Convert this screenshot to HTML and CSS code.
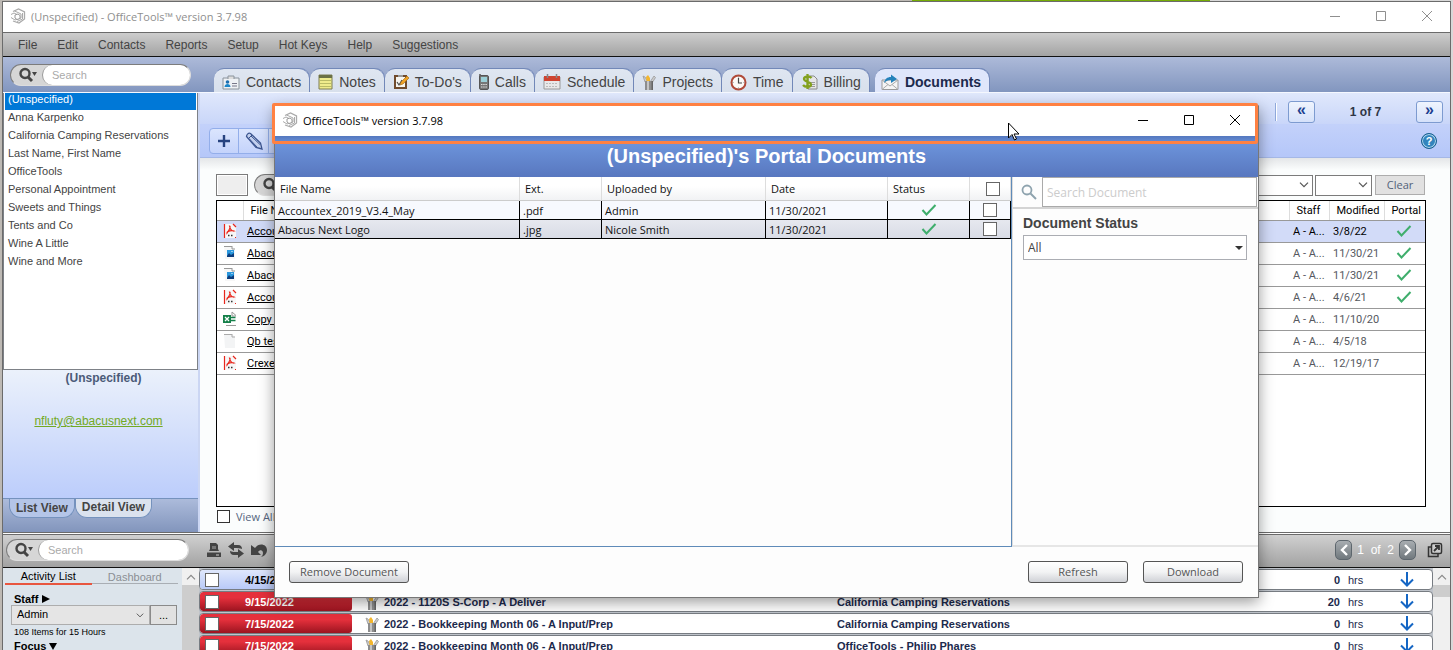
FILE: index.html
```html
<!DOCTYPE html>
<html lang="en">
<head>
    <meta charset="UTF-8">
    <title>OfficeTools - Portal Documents</title>
    <link rel="stylesheet" href="styles.css">
</head>
<body>
<!-- icons -->
<svg class="sprite" width="0" height="0">
    <symbol id="logo" viewBox="0 0 16 16">
        <path d="M3 3.500 8.500 1 14.500 4v7L9 15l-6-2" fill="none" stroke="#aaa" stroke-width="1.300"/>
        <path d="M1 6.500 4 5l3 1.500M1 9.500l4 2.500 6-2V6L8 4.500 4.500 3M12.500 5v6L7 13.500" fill="none" stroke="#aaa"/>
        <path d="M5 7l3-1 2 1.500v3l-3 1-2-1.500z" fill="#fff" stroke="#999"/>
    </symbol>
    <symbol id="lens" viewBox="0 0 20 16">
        <circle cx="7" cy="6.500" r="4.500" fill="none" stroke="#444" stroke-width="2.400"/>
        <path d="M10 10l4 4" stroke="#444" stroke-width="3"/>
        <path d="M14 5h5l-2.500 4z" fill="#444"/>
    </symbol>
    <symbol id="pdf" viewBox="0 0 14 16">
        <path d="M1 1h9l3 3v11H1z" fill="#f7f7f7"/>
        <path d="M1.500 1v14M10 1l3 3M12 14.500h1" fill="none" stroke="#e8261c" stroke-width="1.200"/>
        <path d="M6.500 3c1.500 0 0 4-2.500 7 0-2 5-3 7-2-2 .5-4-2-4.500-5z" fill="none" stroke="#e8261c" stroke-width="1.200"/>
        <path d="M5 12.500h1.500M8 12.500h1.500" stroke="#333" stroke-width="1.500"/>
    </symbol>
    <symbol id="img" viewBox="0 0 14 16">
        <path d="M1 1h8l3 3v10H2z" fill="#f7f7f7"/>
        <path d="M1 1.500h8M9 1v3h3" fill="none" stroke="#999"/>
        <path d="M4 5h7v7H4z" fill="#2a97dd"/>
        <path d="M4 11l2-3 2 2 3-2v4H4z" fill="#0c3c7c"/>
        <path d="M8.500 6h1v1h-1z" fill="#fff"/>
    </symbol>
    <symbol id="xls" viewBox="0 0 14 16">
        <path d="M9 1l4 3.500M9 1v4h4M3 14.500h10" fill="none" stroke="#999"/>
        <path d="M0 4h8v8H0z" fill="#15804a"/>
        <path d="M2 6l4 4M6 6l-4 4" stroke="#fff" stroke-width="1.300"/>
        <path d="M8 6.500h4.500M8 9.500h4.500" stroke="#15804a" stroke-width="1.500"/>
    </symbol>
    <symbol id="blank" viewBox="0 0 14 16">
        <path d="M1 1h8l3 3v11H2z" fill="#f3f4f5"/>
        <path d="M1 1.500h8M9 1v3h3" fill="none" stroke="#aaa"/>
    </symbol>
    <symbol id="tick" viewBox="0 0 16 12">
        <path d="M1.500 6l4 4.500L14.500 1" fill="none" stroke="#3fae6c" stroke-width="2"/>
    </symbol>
    <symbol id="chev" viewBox="0 0 10 6">
        <path d="M1 .7 5 4.700 9 .7" fill="none" stroke="#555" stroke-width="1.200"/>
    </symbol>
    <symbol id="chev-up" viewBox="0 0 10 6">
        <path d="M1 5.300 5 1.300 9 5.300" fill="none" stroke="#888" stroke-width="1.200"/>
    </symbol>
    <symbol id="down" viewBox="0 0 14 15">
        <path d="M7 0v13M1 7.500l6 6 6-6" fill="none" stroke="#1566c4" stroke-width="2"/>
    </symbol>
    <symbol id="pencils" viewBox="0 0 14 16">
        <path d="M3 8 1 2l2 1 3 5M8 8l4-6 1.500 1.500L10 9" fill="#ccc" stroke="#999" stroke-width=".8"/>
        <path d="M4.500 7 4 3l2-2 2 3v4z" fill="#f3b62e"/>
        <path d="M3 7h8v9H3z" fill="#8d8d8d"/>
        <path d="M5 7h2v9H5z" fill="#c5c5c5"/>
        <path d="M9.500 7H11v9H9.500z" fill="#666"/>
    </symbol>
    <symbol id="win-min" viewBox="0 0 10 10"><path d="M0 5.500h10" stroke="currentColor"/></symbol>
    <symbol id="win-max" viewBox="0 0 10 10"><path d="M.5.5h9v9h-9z" fill="none" stroke="currentColor"/></symbol>
    <symbol id="win-close" viewBox="0 0 10 10"><path d="M0 0l10 10M10 0 0 10" stroke="currentColor"/></symbol>
</svg>

<div class="window">
    <div class="title-bar">
        <svg class="logo"><use href="#logo"/></svg>
        <span>(Unspecified) - OfficeTools™ version 3.7.98</span>
        <div class="win-buttons">
            <button aria-label="Minimize"><svg><use href="#win-min"/></svg></button>
            <button aria-label="Maximize"><svg><use href="#win-max"/></svg></button>
            <button aria-label="Close"><svg><use href="#win-close"/></svg></button>
        </div>
    </div>

    <nav class="menu">
        <a href="#">File</a>
        <a href="#">Edit</a>
        <a href="#">Contacts</a>
        <a href="#">Reports</a>
        <a href="#">Setup</a>
        <a href="#">Hot Keys</a>
        <a href="#">Help</a>
        <a href="#">Suggestions</a>
    </nav>

    <div class="tab-header">
        <div class="pill">
            <button aria-label="Search options"><svg><use href="#lens"/></svg></button>
            <input type="text" placeholder="Search" aria-label="Search contacts">
        </div>
        <nav class="tabs">
            <a href="#">
                <svg width="18" height="16" viewBox="0 0 18 16">
                    <path d="M1 4h16v11H1z" fill="#eef1f4" stroke="#8b949c"/>
                    <path d="M6 5V2h6v3" fill="#ddd" stroke="#8b949c"/>
                    <circle cx="5.500" cy="8" r="1.800" fill="#1d6fb0"/>
                    <path d="M2.500 13c0-4 6-4 6 0z" fill="#1d86c8"/>
                    <path d="M10 9.500h5M10 12h5" stroke="#778"/>
                </svg>Contacts</a>
            <a href="#">
                <svg width="15" height="16" viewBox="0 0 15 16">
                    <path d="M1 1h13v14H1z" fill="#eeeb8c" stroke="#7d7d52"/>
                    <path d="M1 1h13v3H1z" fill="#6b7145"/>
                    <path d="M2 6.500h11M2 9.500h11M2 12.500h11" stroke="#b9bb66"/>
                </svg>Notes</a>
            <a href="#">
                <svg width="16" height="16" viewBox="0 0 16 16">
                    <path d="M1 1h13v14H1z" fill="#704b2c"/>
                    <path d="M3 3h9v10H3z" fill="#f7f5ef"/>
                    <path d="M5 1h5v2H5z" fill="#999"/>
                    <path d="M4 8l2 3 3-5" fill="none" stroke="#4a4a4a" stroke-width="1.200"/>
                    <path d="M7 11l1-3 6-6 2 2-6 6z" fill="#f0a325" stroke="#9c6510" stroke-width=".6"/>
                </svg>To-Do's</a>
            <a href="#">
                <svg width="10" height="16" viewBox="0 0 10 16">
                    <path d="M1 0v3" stroke="#555" stroke-width="1.500"/>
                    <rect x=".5" y="1.500" width="9" height="14" rx="1.500" fill="#777" stroke="#555"/>
                    <path d="M2 3h6v5H2z" fill="#9bd0d8"/>
                    <path d="M2 10.500h6M2 13h6" stroke="#ddd" stroke-dasharray="1.500 .7"/>
                </svg>Calls</a>
            <a href="#">
                <svg width="18" height="16" viewBox="0 0 18 16">
                    <path d="M1 3h16v12H1z" fill="#e9e9e9" stroke="#999"/>
                    <path d="M1 2h16v5H1z" fill="#cf4431"/>
                    <path d="M4.500 0v4M13.500 0v4" stroke="#888" stroke-width="1.500"/>
                    <path d="M3 9.500h12M3 12.500h12" stroke="#bbb" stroke-dasharray="2 1"/>
                </svg>Schedule</a>
            <a href="#"><svg width="14" height="16"><use href="#pencils"/></svg>Projects</a>
            <a href="#">
                <svg width="17" height="17" viewBox="0 0 17 17">
                    <circle cx="8.500" cy="8.500" r="7" fill="#fbf9f6" stroke="#b04a39" stroke-width="2"/>
                    <path d="M8.500 4v5H12" fill="none" stroke="#444" stroke-width="1.200"/>
                    <path d="M8.500 2.500v1M8.500 13.500v1M2.500 8.500h1M13.500 8.500h1" stroke="#888"/>
                </svg>Time</a>
            <a href="#">
                <svg width="17" height="16" viewBox="0 0 17 16">
                    <path d="M7 2h6l3 3v10H7z" fill="#e6e6e6" stroke="#8a8a8a"/>
                    <path d="M9 8.500h5M9 10.500h5M9 12.500h5" stroke="#999"/>
                    <path d="M10.500 4C9 2 3 2 3 5s7 2.500 7 5.500-6 3-8 .5M6.500 0v15" fill="none" stroke="#83a11d" stroke-width="2.300"/>
                </svg>Billing</a>
            <a href="#" class="active">
                <svg width="18" height="16" viewBox="0 0 18 16">
                    <path d="M1 6h16v9.500H1z" fill="#f5f5f5" stroke="#999"/>
                    <path d="M1 6l8 6 8-6M1 15.500l6-5M17 15.500l-6-5" fill="none" stroke="#aaa"/>
                    <path d="M3 9c1-4 3-6 7-6V.5L16 5l-6 4V6C7 6 5 7 3 9z" fill="#2582bb"/>
                </svg>Documents</a>
        </nav>
    </div>

    <div class="main">
        <aside class="sidebar">
            <ul class="contact-list">
                <li class="selected">(Unspecified)</li>
                <li>Anna Karpenko</li>
                <li>California Camping Reservations</li>
                <li>Last Name, First Name</li>
                <li>OfficeTools</li>
                <li>Personal Appointment</li>
                <li>Sweets and Things</li>
                <li>Tents and Co</li>
                <li>Wine A Little</li>
                <li>Wine and More</li>
            </ul>
            <div class="contact-card">
                <b>(Unspecified)</b>
                <a href="#">nfluty@abacusnext.com</a>
            </div>
            <div class="view-tabs">
                <a href="#">List View</a>
                <a href="#" class="active">Detail View</a>
            </div>
        </aside>

        <section class="documents">
            <div class="pager-bar">
                <span class="sep"></span>
                <button>«</button>
                <b>1 of 7</b>
                <button>»</button>
            </div>
            <div class="tool-bar">
                <div class="tool-group">
                    <button aria-label="Add"><svg width="12" height="12" viewBox="0 0 12 12"><path d="M6 0v12M0 6h12" stroke="#27437f" stroke-width="2.400"/></svg></button>
                    <button aria-label="Edit"><svg width="18" height="18" viewBox="0 0 18 18"><path d="M1.500 4.500c0-2 2-4 4-3l10 9.500 1.500 6-6-1.500z" fill="#c3d0ee" stroke="#3c558f" stroke-width="1.300"/><path d="M4 6.500 12 15M6 4l9 8.500M3 7l4-4" stroke="#3c558f"/></svg></button>
                    <button aria-label="More"></button>
                </div>
                <button class="help" aria-label="Help">?</button>
            </div>
            <div class="doc-body">
                <div class="filters">
                    <span class="swatch"></span>
                    <div class="pill">
                        <button aria-label="Search options"><svg><use href="#lens"/></svg></button>
                        <input type="text" aria-label="Search files">
                    </div>
                    <div class="select wide"><select aria-label="Type"><option></option></select><svg><use href="#chev"/></svg></div>
                    <div class="select"><select aria-label="Year"><option></option></select><svg><use href="#chev"/></svg></div>
                    <button class="clear">Clear</button>
                </div>
                <div class="file-box">
                    <table class="files">
                        <thead>
                        <tr><th class="c-icon"></th><th>File Name</th><th class="c-staff">Staff</th><th class="c-mod">Modified</th><th class="c-portal">Portal</th></tr>
                        </thead>
                        <tbody>
                        <tr class="selected"><td><svg><use href="#pdf"/></svg></td><td><a href="#">Accountex</a></td><td>A - A...</td><td>3/8/22</td><td><svg class="tick"><use href="#tick"/></svg></td></tr>
                        <tr><td><svg><use href="#img"/></svg></td><td><a href="#">Abacus Next</a></td><td>A - A...</td><td>11/30/21</td><td><svg class="tick"><use href="#tick"/></svg></td></tr>
                        <tr><td><svg><use href="#img"/></svg></td><td><a href="#">Abacus Next</a></td><td>A - A...</td><td>11/30/21</td><td><svg class="tick"><use href="#tick"/></svg></td></tr>
                        <tr><td><svg><use href="#pdf"/></svg></td><td><a href="#">Accountex</a></td><td>A - A...</td><td>4/6/21</td><td><svg class="tick"><use href="#tick"/></svg></td></tr>
                        <tr><td><svg><use href="#xls"/></svg></td><td><a href="#">Copy of</a></td><td>A - A...</td><td>11/10/20</td><td></td></tr>
                        <tr><td><svg><use href="#blank"/></svg></td><td><a href="#">Qb test</a></td><td>A - A...</td><td>4/5/18</td><td></td></tr>
                        <tr><td><svg><use href="#pdf"/></svg></td><td><a href="#">Crexendo</a></td><td>A - A...</td><td>12/19/17</td><td></td></tr>
                        </tbody>
                    </table>
                </div>
                <label class="view-all"><input type="checkbox">View All</label>
            </div>
        </section>
    </div>

    <div class="lower">
        <div class="lower-bar">
            <div class="pill">
                <button aria-label="Search options"><svg><use href="#lens"/></svg></button>
                <input type="text" placeholder="Search" aria-label="Search activities">
            </div>
            <button aria-label="Print"><svg width="16" height="16" viewBox="0 0 16 16"><path d="M4 1h6l2 2v4l1 2H3l1-2z" fill="#444"/><path d="M6 4h4v3H6z" fill="#777"/><path d="M1 10.500h14V15H1z" fill="#444"/><path d="M10 13h3" stroke="#ccc"/></svg></button>
            <button aria-label="Refresh"><svg width="16" height="16" viewBox="0 0 16 16"><path d="M6 0v3h4c3 0 4 2 4 4-2-1-4-1-8-1v3L0 4.500zM10 16v-3H6c-3 0-4-2-4-4 2 1 4 1 8 1V7l6 4.500z" fill="#444"/></svg></button>
            <button aria-label="Undo"><svg width="18" height="16" viewBox="0 0 18 16"><path d="M1 3v10h10L8 10c2-3 5-2 5 1 0 2-1 3-2 4 4-1 6-4 6-7 0-6-8-8-12-2z" fill="#444"/></svg></button>
            <button aria-label="Expand"><svg width="16" height="16" viewBox="0 0 16 16"><path d="M1 1h6L5 3l8 8-2 2-8-8-2 2zM1 15v-5l4 4z" fill="#444"/></svg></button>
            <div class="lower-pager">
                <button class="step" aria-label="Previous"><svg width="8" height="12" viewBox="0 0 8 12"><path d="M7 1 2 6l5 5" fill="none" stroke="#fff" stroke-width="2.400"/></svg></button>
                <span>1&nbsp; of&nbsp; 2</span>
                <button class="step" aria-label="Next"><svg width="8" height="12" viewBox="0 0 8 12"><path d="m1 1 5 5-5 5" fill="none" stroke="#fff" stroke-width="2.400"/></svg></button>
                <button aria-label="Open in new window"><svg width="16" height="16" viewBox="0 0 16 16"><path d="M4 5H1.500v9.500H11V12" fill="none" stroke="#333" stroke-width="1.500"/><rect x="4.500" y="1.500" width="10" height="10" rx="1.500" fill="#ccc" stroke="#333" stroke-width="1.500"/><path d="M7 9l4-4M8 4h4v4" fill="none" stroke="#333" stroke-width="1.800"/></svg></button>
            </div>
        </div>
        <div class="lower-body">
            <div class="activity">
                <div class="activity-tabs">
                    <a href="#" class="active">Activity List</a>
                    <a href="#">Dashboard</a>
                </div>
                <div class="activity-form">
                    <label for="staff">Staff <i class="tri"></i></label>
                    <div class="staff-row">
                        <div class="select"><select id="staff"><option>Admin</option></select><svg><use href="#chev"/></svg></div>
                        <button>...</button>
                    </div>
                    <small>108 Items for 15 Hours</small>
                    <b>Focus <i class="tri open"></i></b>
                </div>
            </div>
            <div class="scroll"><svg><use href="#chev-up"/></svg></div>
            <div class="tasks">
                <div class="task upcoming">
                    <label class="due"><input type="checkbox">4/15/2022</label>
                    <svg class="kind"><use href="#pencils"/></svg>
                    <span class="name"></span><span class="client"></span>
                    <b class="num">0</b><span class="unit">hrs</span>
                    <svg class="arrow"><use href="#down"/></svg>
                </div>
                <div class="task">
                    <label class="due"><input type="checkbox">9/15/2022</label>
                    <svg class="kind"><use href="#pencils"/></svg>
                    <span class="name">2022 - 1120S S-Corp - A Deliver</span><span class="client">California Camping Reservations</span>
                    <b class="num">20</b><span class="unit">hrs</span>
                    <svg class="arrow"><use href="#down"/></svg>
                </div>
                <div class="task">
                    <label class="due"><input type="checkbox">7/15/2022</label>
                    <svg class="kind"><use href="#pencils"/></svg>
                    <span class="name">2022 - Bookkeeping Month 06 - A Input/Prep</span><span class="client">California Camping Reservations</span>
                    <b class="num">0</b><span class="unit">hrs</span>
                    <svg class="arrow"><use href="#down"/></svg>
                </div>
                <div class="task">
                    <label class="due"><input type="checkbox">7/15/2022</label>
                    <svg class="kind"><use href="#pencils"/></svg>
                    <span class="name">2022 - Bookkeeping Month 06 - A Input/Prep</span><span class="client">OfficeTools - Philip Phares</span>
                    <b class="num">0</b><span class="unit">hrs</span>
                    <svg class="arrow"><use href="#down"/></svg>
                </div>
            </div>
            <div class="scroll light"><svg><use href="#chev-up"/></svg><i></i></div>
        </div>
    </div>
</div>

<!-- portal documents dialog -->
<div class="dialog">
    <div class="title-bar">
        <svg class="logo"><use href="#logo"/></svg>
        <span>OfficeTools™ version 3.7.98</span>
        <div class="win-buttons">
            <button aria-label="Minimize"><svg><use href="#win-min"/></svg></button>
            <button aria-label="Maximize"><svg><use href="#win-max"/></svg></button>
            <button aria-label="Close"><svg><use href="#win-close"/></svg></button>
        </div>
    </div>
    <h1>(Unspecified)'s Portal Documents</h1>
    <div class="dialog-body">
        <div class="portal-list">
            <table>
                <thead>
                <tr><th>File Name</th><th class="w-ext">Ext.</th><th class="w-by">Uploaded by</th><th class="w-date">Date</th><th class="w-status">Status</th><th class="w-check"><input type="checkbox" aria-label="Select all"></th></tr>
                </thead>
                <tbody>
                <tr><td>Accountex_2019_V3.4_May</td><td>.pdf</td><td>Admin</td><td>11/30/2021</td><td class="mid"><svg><use href="#tick"/></svg></td><td class="mid"><input type="checkbox" aria-label="Select Accountex_2019_V3.4_May"></td></tr>
                <tr class="alt"><td>Abacus Next Logo</td><td>.jpg</td><td>Nicole Smith</td><td>11/30/2021</td><td class="mid"><svg><use href="#tick"/></svg></td><td class="mid"><input type="checkbox" aria-label="Select Abacus Next Logo"></td></tr>
                </tbody>
            </table>
        </div>
        <div class="portal-side">
            <div class="doc-search">
                <svg width="16" height="16" viewBox="0 0 16 16"><circle cx="6" cy="6" r="4.500" fill="none" stroke="#8ea3ae" stroke-width="1.800"/><path d="M9.500 9.500 15 15" stroke="#8ea3ae" stroke-width="2"/></svg>
                <input type="text" placeholder="Search Document" aria-label="Search Document">
            </div>
            <div class="doc-status">
                <label for="status">Document Status</label>
                <div class="select"><select id="status"><option>All</option></select><i class="caret"></i></div>
            </div>
        </div>
    </div>
    <div class="dialog-footer">
        <button class="remove">Remove Document</button>
        <button>Refresh</button>
        <button>Download</button>
    </div>
    <div class="highlight"></div>
    <svg class="cursor" width="12" height="19" viewBox="0 0 12 19"><path d="M.5 1v15l3.500-3.500L6.500 18l2-1-2.500-5h5z" fill="#fff" stroke="#000"/></svg>
</div>
</body>
</html>
```
FILE: styles.css
```css
* {
    box-sizing: border-box;
}
body {
    margin: 0;
    height: 100vh;
    overflow: hidden;
    position: relative;
    padding: 1px 2px 0;
    background: linear-gradient(90deg, #bdb9b4 912px, #76ad05 912px, #76ad05 1210px, #d8d8d8 1210px);
    font-family: "Liberation Sans", Arial, sans-serif;
    font-size: 11px;
    color: #444;
}
button, input, select {
    font: inherit;
    color: inherit;
    margin: 0;
    padding: 0;
    border: 0;
    background: none;
}
select {
    appearance: none;
    border-radius: 0;
}
a {
    color: inherit;
    text-decoration: none;
}
svg {
    display: block;
    flex: none;
}
.sprite {
    position: absolute;
}
input[type=checkbox] {
    appearance: none;
    display: block;
    flex: none;
    width: 13px;
    height: 13px;
    border: 1px solid #333;
    background: #fff;
}

/* window frame */
.window {
    display: flex;
    flex-direction: column;
    height: 100%;
    border: 1px solid #6b6b6b;
    border-bottom: 0;
    background: #fff;
}
.title-bar {
    display: flex;
    align-items: center;
    flex: none;
    height: 30px;
    padding: 0 0 2px 7px;
    gap: 5px;
    background: #fff;
    color: #8f8f8f;
    font-family: "Open Sans", "Noto Sans", sans-serif;
    font-size: 11px;
}
.logo {
    width: 16px;
    height: 16px;
}
.win-buttons {
    display: flex;
    margin-left: auto;
}
.win-buttons button {
    display: flex;
    justify-content: center;
    width: 46px;
}
.win-buttons svg {
    width: 10px;
    height: 10px;
}
.menu {
    display: flex;
    align-items: center;
    flex: none;
    gap: 20px;
    height: 25px;
    padding-left: 15px;
    border-top: 1px solid #6b6b6b;
    border-bottom: 1px solid #111;
    background: linear-gradient(#cdcdcd, #a3a3a3);
    font-size: 12px;
}

/* search pills */
.pill {
    display: flex;
    flex: none;
    width: 181px;
    height: 22px;
    border: 1px solid #7c7c7c;
    border-right-color: #ddd;
    border-bottom-color: #ddd;
    border-radius: 11px;
    background: #d6d6d6;
    overflow: hidden;
}
.pill button {
    width: 31px;
    padding-left: 7px;
}
.pill svg {
    width: 20px;
    height: 16px;
}
.pill input {
    flex: 1;
    min-width: 0;
    padding-left: 9px;
    border-left: 1px solid #999;
    border-radius: 11px;
    background: #fff;
}
input::placeholder {
    color: #aaa;
    opacity: 1;
}

/* top tabs */
.tab-header {
    display: flex;
    align-items: flex-end;
    flex: none;
    height: 36px;
    padding-left: 7px;
    border-bottom: 1px solid #f5f8ff;
    background: linear-gradient(#adbad9, #8296bf);
}
.tab-header .pill {
    margin-bottom: 6px;
}
.tabs {
    display: flex;
    gap: 1px;
    margin-left: 23px;
    font-size: 14px;
}
.tabs a {
    display: flex;
    align-items: center;
    gap: 6px;
    height: 24px;
    padding: 3px 8px 0;
    border: solid #7288b8;
    border-width: 1px 0 0;
    border-radius: 10px 10px 0 0;
    background: linear-gradient(#dfe6f1, #d8e0ec);
    box-shadow: 1px 0 #7288b8;
}
.tabs .active {
    margin-left: 5px;
    padding-left: 6px;
    background: #dfe6fb;
    color: #1c2a4d;
    font-weight: bold;
}

/* main area */
.main {
    display: flex;
    flex: none;
}
.sidebar {
    display: flex;
    flex-direction: column;
    flex: none;
    width: 197px;
    border-right: 2px solid #cbd6f3;
}
.contact-list {
    list-style: none;
    height: 277px;
    margin: 0;
    padding: 0 1px;
    border: 1px solid #7d8187;
    border-top: 0;
    background: #fff;
}
.contact-list li {
    height: 18px;
    padding-left: 3px;
    line-height: 14px;
}
.contact-list .selected {
    height: 17px;
    line-height: 13px;
    background: #0078d7;
    color: #fff;
}
.contact-card {
    display: flex;
    flex-direction: column;
    align-items: center;
    gap: 28px;
    height: 128px;
    padding-top: 1px;
    background: linear-gradient(#ebf1fb, #bccdfb);
    font-size: 12px;
    line-height: 15px;
}
.contact-card b {
    padding-left: 6px;
    color: #4b5b78;
}
.contact-card a {
    padding-right: 4px;
    color: #72a924;
    text-decoration: underline;
}
.view-tabs {
    display: flex;
    align-items: flex-start;
    flex: 1;
    padding-left: 6px;
    border-top: 1px solid #7592bd;
    background: linear-gradient(#acbbdb, #8295bc);
    font-size: 12px;
    font-weight: bold;
}
.view-tabs a {
    height: 19px;
    padding: 0 6px;
    border: 1px solid #7592bd;
    border-top: 0;
    border-radius: 0 0 12px 12px;
    background: #b4c5e8;
    line-height: 18px;
}
.view-tabs .active {
    background: #dbe2ee;
    line-height: 16px;
}
.documents {
    flex: 1;
    min-width: 0;
}
.pager-bar {
    display: flex;
    align-items: center;
    justify-content: flex-end;
    height: 31px;
    padding: 6px 7px 0 0;
    background: linear-gradient(#e0e8fc, #c9d6f9);
    color: #2f3646;
    font-size: 12px;
}
.pager-bar .sep {
    width: 2px;
    height: 18px;
    margin-right: 11px;
    border-left: 1px solid #8fa8da;
    background: #fff;
}
.pager-bar button {
    width: 27px;
    height: 22px;
    padding-bottom: 3px;
    border: 1px solid #7d9bd0;
    border-radius: 3px;
    background: linear-gradient(#eff4fe, #d5e1fa);
    color: #1c3f8f;
    font-size: 16px;
    font-weight: bold;
    line-height: 16px;
}
.pager-bar b {
    width: 101px;
    text-align: center;
}
.tool-bar {
    display: flex;
    align-items: center;
    justify-content: space-between;
    height: 34px;
    padding: 0 13px 0 9px;
    border-bottom: 1px solid #a5b8e6;
    background: linear-gradient(#c3d1fa, #b5c7f9);
}
.tool-group {
    display: flex;
    height: 26px;
    border: 1px solid #93aeea;
    border-radius: 4px;
    background: linear-gradient(#dbe5fd, #c4d3fb);
}
.tool-group button {
    display: flex;
    align-items: center;
    justify-content: center;
    width: 30px;
    border-left: 1px solid #93aeea;
}
.tool-group button:first-child {
    width: 28px;
    border: 0;
}
.help {
    width: 16px;
    height: 16px;
    border: 1px solid #19608f;
    border-radius: 50%;
    background: #3385bd;
    box-shadow: inset 0 0 0 1px #b4d8ee;
    color: #fff;
    font-weight: bold;
    line-height: 14px;
}
.doc-body {
    padding: 16px 24px 6px 16px;
    background: linear-gradient(#e4e6e8, #fbfdfd 12px);
}
.filters {
    display: flex;
    align-items: center;
    gap: 2px;
    padding-right: 1px;
}
.swatch {
    width: 32px;
    height: 22px;
    border: 1px solid #7b7b7b;
    background: #eee;
    box-shadow: inset 0 0 0 1px #fff;
}
.filters .pill {
    margin: 0 auto 0 4px;
}
.select {
    display: grid;
    align-items: center;
}
.select > * {
    grid-area: 1 / 1;
}
.select > svg, .select > .caret {
    justify-self: end;
    width: 10px;
    height: 6px;
    margin-right: 4px;
    pointer-events: none;
}
.select select {
    width: 100%;
}
.filters .select {
    width: 57px;
}
.filters .wide {
    width: 100px;
}
.filters select {
    height: 21px;
    border: 1px solid #7b7b7b;
    background: #fff;
}
.clear {
    width: 50px;
    height: 20px;
    margin-left: 1px;
    border: 1px solid #adadad;
    background: #e1e1e1;
    color: #52617a;
    font-family: "Open Sans", sans-serif;
    line-height: 16px;
}
.file-box {
    height: 307px;
    margin-top: 4px;
    border: 1px solid #000;
    background: #fff;
}
.files {
    width: 100%;
    border-collapse: collapse;
    table-layout: fixed;
    font-family: Roboto, sans-serif;
    color: #55585e;
}
.files th {
    height: 19px;
    padding: 0 0 0 7px;
    border-right: 1px solid #ddd;
    border-bottom: 1px solid #999;
    color: #000;
    font-weight: normal;
    text-align: left;
}
.files .c-icon {
    width: 26px;
}
.files .c-staff {
    width: 40px;
}
.files .c-mod {
    width: 55px;
}
.files .c-portal {
    width: 41px;
    border-right: 0;
}
.files td {
    height: 22px;
    padding: 0 0 0 4px;
    border-bottom: 1px solid #999;
    white-space: nowrap;
}
.files td:first-child {
    padding-left: 6px;
}
.files td svg {
    width: 14px;
    height: 16px;
}
.files td .tick {
    width: 16px;
    height: 12px;
    margin-left: 8px;
}
.files td a {
    color: #000;
    text-decoration: underline;
}
.files .selected {
    background: #d2dbf8;
    color: #000;
}
.view-all {
    display: flex;
    align-items: center;
    gap: 6px;
    height: 19px;
    padding-left: 1px;
    color: #55657d;
    font-family: "Open Sans", sans-serif;
}

/* lower panel */
.lower {
    display: flex;
    flex-direction: column;
    flex: 1;
    min-height: 0;
    border-top: 1px solid #6b6b6b;
    box-shadow: inset 0 1px #fff;
    padding-top: 1px;
    overflow: hidden;
}
.lower-bar {
    display: flex;
    align-items: center;
    flex: none;
    gap: 6px;
    height: 34px;
    padding: 0 7px 2px 3px;
    border-top: 1px solid #6b6b6b;
    border-bottom: 1px solid #111;
    background: linear-gradient(#d0d0d0, #a2a2a2);
}
.lower-bar .pill {
    width: 183px;
    margin-right: 11px;
}
.lower-pager {
    display: flex;
    align-items: center;
    gap: 5px;
    margin-left: auto;
    color: #fff;
    font-size: 12px;
}
.lower-pager .step {
    display: flex;
    align-items: center;
    justify-content: center;
    width: 17px;
    height: 20px;
    border: 1px solid #5d666d;
    border-radius: 5px;
    background: linear-gradient(#a8adb1, #70787d);
}
.lower-pager .step:nth-of-type(2) {
    margin-right: 6px;
}
.lower-body {
    display: flex;
    flex: 1;
    min-height: 0;
}
.activity {
    flex: none;
    width: 179px;
    padding-left: 2px;
    background: #dce4eb;
    color: #000;
}
.activity-tabs {
    display: flex;
    padding-right: 4px;
    text-align: center;
}
.activity-tabs a {
    flex: 1;
    height: 16px;
    border-bottom: 1px solid #a9aeb4;
    color: #8b8f94;
    line-height: 18px;
}
.activity-tabs .active {
    border-color: #e8563f;
    box-shadow: 0 1px #e8563f;
    color: #000;
    line-height: 16px;
}
.activity-form {
    display: flex;
    flex-direction: column;
    padding: 9px 4px 0 9px;
    line-height: 12px;
}
.activity-form label, .activity-form b {
    font-weight: bold;
}
.tri {
    display: inline-block;
    border: 4px solid transparent;
    border-left: 8px solid #000;
    border-right: 0;
}
.tri.open {
    border: 4px solid transparent;
    border-top: 7px solid #000;
    border-bottom: 0;
}
.staff-row {
    display: flex;
    width: 166px;
    margin-left: -3px;
}
.staff-row .select {
    flex: 1;
}
.staff-row select {
    height: 20px;
    padding: 0 0 2px 5px;
    border: 1px solid #adadad;
    background: #e5e5e5;
}
.staff-row .select svg {
    width: 8px;
    height: 5px;
    margin-right: 6px;
}
.staff-row button {
    width: 27px;
    border: 1px solid #8a8a8a;
    background: #e1e1e1;
}
.activity-form small {
    height: 15px;
    font-size: 9px;
    line-height: 15px;
}
.scroll {
    flex: none;
    width: 17px;
    background: linear-gradient(#f0f0f0 17px, #cdcdcd 17px);
}
.scroll svg {
    width: 10px;
    height: 6px;
    margin: 6px auto 5px;
}
.scroll i {
    display: block;
    height: 12px;
    background: #cdcdcd;
}
.scroll.light {
    background: #f0f0f0;
}
.tasks {
    flex: 1;
    min-width: 0;
    padding-top: 1px;
    background: #bfc4cb;
}
.task {
    display: flex;
    align-items: center;
    height: 21px;
    margin-bottom: 1px;
    padding-right: 18px;
    border: 1px solid #777c82;
    border-radius: 4px;
    background: #fff;
    color: #1c2a4d;
    overflow: hidden;
}
.due {
    display: flex;
    align-items: center;
    flex: none;
    gap: 26px;
    width: 152px;
    height: 19px;
    padding-left: 5px;
    border-radius: 3px;
    background: linear-gradient(#e5303c 30%, #9c1420);
    color: #fff;
    font-weight: bold;
}
.upcoming .due {
    background: linear-gradient(#dfe7fc, #b9caf8);
    color: #000;
}
.task input {
    width: 14px;
    height: 14px;
    border-color: #666;
}
.kind {
    width: 14px;
    height: 16px;
    margin: 0 5px 0 13px;
}
.name, .client {
    flex: 1;
    font-weight: bold;
}
.client {
    flex: none;
    width: 470px;
}
.num {
    width: 33px;
    text-align: right;
}
.unit {
    width: 60px;
    padding-left: 8px;
}
.arrow {
    width: 14px;
    height: 15px;
}

/* dialog */
.dialog {
    position: absolute;
    top: 105px;
    left: 274px;
    right: 194px;
    border: 1px solid #777;
    border-top-color: #bbb;
    background: #fdfdfd;
    box-shadow: 0 4px 14px rgba(0, 0, 0, .4);
    font-family: "Open Sans", "Noto Sans", sans-serif;
    color: #111;
}
.dialog .title-bar {
    color: #000;
}
.dialog h1 {
    height: 41px;
    margin: 0;
    background: linear-gradient(#5478bf, #6c93da 8px, #5877bf);
    color: #fff;
    font: bold 20px/41px "Liberation Sans", Arial, sans-serif;
    text-align: center;
}
.dialog-body {
    display: flex;
    height: 370px;
}
.portal-list {
    flex: 1;
    border-right: 1px solid #5f8bb9;
    border-bottom: 1px solid #5f8bb9;
}
.portal-list table {
    width: 100%;
    border-collapse: separate;
    border-spacing: 0;
    table-layout: fixed;
}
.portal-list th {
    height: 24px;
    padding: 0 0 0 5px;
    border-right: 1px solid #ddd;
    border-bottom: 1px solid #ccc;
    background: linear-gradient(#fff 40%, #f1f2f4);
    font-weight: normal;
    text-align: left;
}
.portal-list td {
    height: 19px;
    padding: 1px 0 0 3px;
    border-right: 1px solid #000;
    border-bottom: 1px solid #000;
    background: #f7f9fe;
    line-height: 16px;
}
.portal-list .alt td {
    background: linear-gradient(#e6e8ef, #d9dce6);
}
.w-ext, .w-status {
    width: 82px;
}
.w-by {
    width: 164px;
}
.w-date {
    width: 122px;
}
.w-check {
    width: 41px;
}
.portal-list input {
    width: 14px;
    height: 14px;
    margin: 0 auto;
    border-color: #666;
}
.portal-list .mid {
    padding: 0;
}
.portal-list td svg {
    width: 16px;
    height: 12px;
    margin: 0 auto;
}
.portal-side {
    width: 246px;
    border-left: 1px solid #ddd;
    border-bottom: 2px solid #e6e6e6;
}
.doc-search {
    display: flex;
    align-items: center;
    gap: 5px;
    height: 32px;
    padding: 0 1px 0 8px;
    border-bottom: 2px solid #d4d4d4;
}
.doc-search input {
    flex: 1;
    height: 30px;
    padding-left: 4px;
    border: 1px solid #aaa;
    background: #fff;
    font-size: 12px;
}
.doc-search input::placeholder {
    color: #ccc;
}
.doc-status {
    padding: 5px 11px 0 10px;
    color: #444;
}
.doc-status label {
    display: block;
    font: bold 14px/18px "Liberation Sans", Arial, sans-serif;
}
.doc-status .select {
    margin-top: 3px;
    font-size: 12px;
}
.doc-status select {
    height: 25px;
    padding-left: 4px;
    border: 1px solid #abadb3;
    background: #fff;
}
.doc-status .caret {
    width: 0;
    height: 0;
    border: 4px solid transparent;
    border-top-color: #333;
    border-bottom: 0;
}
.dialog-footer {
    display: flex;
    align-items: center;
    gap: 15px;
    height: 50px;
    padding: 0 15px 0 14px;
}
.dialog-footer button {
    width: 100px;
    height: 22px;
    border: 1px solid #555;
    border-radius: 3px;
    background: linear-gradient(#fff, #f2f3f4 50%, #cfd1d6);
    color: #555;
    line-height: 18px;
}
.dialog-footer .remove {
    width: 120px;
    margin-right: auto;
}
.highlight {
    position: absolute;
    top: -3px;
    left: -3px;
    right: 0;
    height: 41px;
    border: 3px solid #ff8142;
    border-radius: 2px;
    pointer-events: none;
}
.cursor {
    position: absolute;
    top: 16px;
    right: 238px;
}
```
